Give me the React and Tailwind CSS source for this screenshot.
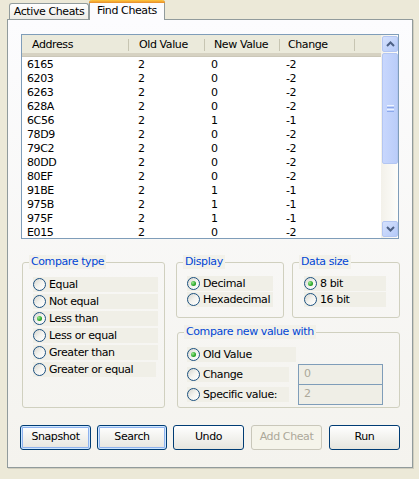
import React from "react";

const rows = [
  ["6165", "2", "0", "-2"],
  ["6203", "2", "0", "-2"],
  ["6263", "2", "0", "-2"],
  ["628A", "2", "0", "-2"],
  ["6C56", "2", "1", "-1"],
  ["78D9", "2", "0", "-2"],
  ["79C2", "2", "0", "-2"],
  ["80DD", "2", "0", "-2"],
  ["80EF", "2", "0", "-2"],
  ["91BE", "2", "1", "-1"],
  ["975B", "2", "1", "-1"],
  ["975F", "2", "1", "-1"],
  ["E015", "2", "0", "-2"],
];

function Radio({ checked }) {
  return (
    <span className="flex h-[13px] w-[13px] shrink-0 items-center justify-center rounded-full border border-[#1C5180] bg-gradient-to-br from-[#D6D5CE] via-[#F3F3EF] to-white">
      {checked && (
        <span className="h-[5px] w-[5px] rounded-full bg-[radial-gradient(circle_at_35%_35%,#9BEA8F,#2AA52A_60%,#178417)]" />
      )}
    </span>
  );
}

function RadioRow({ label, checked, w }) {
  return (
    <div className={`flex h-[15px] items-center bg-[#F0EFE7] ${w}`}>
      <Radio checked={checked} />
      <span className="ml-[3px] whitespace-nowrap leading-none">{label}</span>
    </div>
  );
}

function Group({ label, className, children }) {
  return (
    <div className={`relative rounded-[3px] border border-[#D0D0BF] ${className}`}>
      <span className="absolute left-[6px] top-[-8px] whitespace-nowrap bg-[#F2F1EA] px-[2px] leading-[14px] text-[#0046D5]">
        {label}
      </span>
      {children}
    </div>
  );
}

function Arrow({ up }) {
  return (
    <div className="flex h-[16px] w-[16px] items-center justify-center rounded-[2px] border border-[#B3C6F2] bg-gradient-to-br from-[#D5E1FD] to-[#B5CAF8]">
      <svg width="9" height="6" viewBox="0 0 9 6">
        <path
          d={up ? "M1 5 L4.5 1.5 L8 5" : "M1 1 L4.5 4.5 L8 1"}
          fill="none"
          stroke="#4D6185"
          strokeWidth="2"
        />
      </svg>
    </div>
  );
}

function Button({ children, w, focus, disabled }) {
  const base = "flex h-[25px] items-center justify-center rounded-[3px] border";
  const look = disabled
    ? "border-[#C9C7BA] bg-[#F5F4EA] text-[#ACA899]"
    : focus
    ? "border-[#003C74] bg-gradient-to-b from-white to-[#E6E5DE] shadow-[inset_0_0_0_1px_#CEE7FF,inset_0_0_0_2px_#8FB2EE]"
    : "border-[#003C74] bg-gradient-to-b from-white to-[#E6E5DE]";
  return <div className={`${base} ${look} ${w}`}>{children}</div>;
}

export default function App() {
  return (
    <div className="h-[479px] w-[419px] overflow-hidden bg-[#ECE9D8] text-[11px] tracking-[-0.4px] text-black [font-family:'DejaVu_Sans',sans-serif]">
      {/* tabs */}
      <div className="flex h-[19px] items-end pl-[9px]">
        <div className="flex h-[16px] w-[80px] items-center justify-center rounded-t-[3px] border border-b-0 border-[#919B9C] bg-gradient-to-b from-white to-[#ECEBE6] pt-[2px]">
          Active Cheats
        </div>
        <div className="relative z-10 -mb-px flex h-[20px] w-[76px] flex-col rounded-t-[3px] border-x border-[#919B9C] bg-[#FCFCFE]">
          <div className="-mx-px h-[3px] rounded-t-[3px] bg-gradient-to-b from-[#FFC83C] to-[#E68B2C]" />
          <div className="flex flex-1 items-center justify-center">Find Cheats</div>
        </div>
      </div>

      {/* page */}
      <div className="ml-[7px] h-[449px] w-[406px] border border-[#919B9C] bg-gradient-to-b from-[#FCFCFE] to-[#F4F3EE] shadow-[1px_1px_0_#D0CEBF]">
        {/* list */}
        <div className="ml-[13px] mt-[14px] flex h-[205px] w-[378px] border border-[#7F9DB9] bg-white">
          <div className="flex-1">
            <div className="flex h-[21px] border-b-[3px] border-[#D6D2C2] bg-[#EBEADB] shadow-[0_1px_0_#CBC7B8]">
              {[
                ["Address", "w-[107px] pl-[10px]"],
                ["Old Value", "w-[76px] pl-[10px]"],
                ["New Value", "w-[75px] pl-[9px]"],
                ["Change", "w-[75px] pl-[8px]"],
              ].map(([t, c]) => (
                <div key={t} className={`flex items-center ${c}`}>
                  <span className="flex-1 pt-[3px]">{t}</span>
                  <span className="mt-[2px] h-[12px] w-px bg-[#C7C5B2]" />
                </div>
              ))}
            </div>
            <div className="pt-[1px]">
              {rows.map((r) => (
                <div key={r[0]} className="flex h-[14px] items-center leading-none">
                  <span className="w-[107px] pl-[5px]">{r[0]}</span>
                  <span className="w-[76px] pl-[9px]">{r[1]}</span>
                  <span className="w-[75px] pl-[6px]">{r[2]}</span>
                  <span className="w-[75px] pl-[6px]">{r[3]}</span>
                </div>
              ))}
            </div>
          </div>
          {/* scrollbar */}
          <div className="flex w-[17px] flex-col bg-gradient-to-r from-[#F3F1EA] to-[#FDFDFA] pl-px">
            <div className="mt-px">
              <Arrow up />
            </div>
            <div className="mt-px flex h-[111px] w-[16px] flex-col items-center justify-center gap-[1px] rounded-[2px] border border-[#B3C6F2] bg-gradient-to-r from-[#C8D7FD] to-[#BACDF9]">
              <span className="h-px w-[7px] bg-[#EEF4FE]" />
              <span className="h-px w-[7px] bg-[#8CA9EC]" />
              <span className="h-px w-[7px] bg-[#EEF4FE]" />
              <span className="h-px w-[7px] bg-[#8CA9EC]" />
            </div>
            <div className="flex-1" />
            <div className="mb-px">
              <Arrow />
            </div>
          </div>
        </div>

        {/* groups */}
        <div className="mt-[23px] flex">
          <Group label="Compare type" className="ml-[14px] h-[146px] w-[143px]">
            <div className="flex flex-col gap-[2px] pl-[10px] pt-[14px]">
              <RadioRow label="Equal" w="w-[125px]" />
              <RadioRow label="Not equal" w="w-[125px]" />
              <RadioRow label="Less than" w="w-[125px]" checked />
              <RadioRow label="Less or equal" w="w-[125px]" />
              <RadioRow label="Greater than" w="w-[125px]" />
              <RadioRow label="Greater or equal" w="w-[123px]" />
            </div>
          </Group>
          <div className="ml-[11px] flex flex-col">
            <div className="flex">
              <Group label="Display" className="h-[56px] w-[108px]">
                <div className="flex flex-col gap-[1px] pl-[10px] pt-[13px]">
                  <RadioRow label="Decimal" w="w-[86px]" checked />
                  <RadioRow label="Hexadecimal" w="w-[86px]" />
                </div>
              </Group>
              <Group label="Data size" className="ml-[8px] h-[56px] w-[108px]">
                <div className="flex flex-col gap-[1px] pl-[11px] pt-[13px]">
                  <RadioRow label="8 bit" w="w-[82px]" checked />
                  <RadioRow label="16 bit" w="w-[82px]" />
                </div>
              </Group>
            </div>
            <Group label="Compare new value with" className="ml-px mt-[14px] h-[76px] w-[223px]">
              <div className="pl-[9px] pt-[14px]">
                <RadioRow label="Old Value" w="w-[109px]" checked />
                <div className="mt-[2px] flex">
                  <div className="flex flex-col">
                    <div className="flex h-[20px] items-center">
                      <RadioRow label="Change" w="w-[102px]" />
                    </div>
                    <div className="flex h-[20px] items-center">
                      <RadioRow label="Specific value:" w="w-[102px]" />
                    </div>
                  </div>
                  <div className="ml-[9px] flex flex-col">
                    <div className="flex h-[21px] w-[85px] items-center border border-[#7F9DB9] bg-[#EFEEE6] pl-[5px] text-[#ACA899]">
                      0
                    </div>
                    <div className="-mt-px flex h-[21px] w-[85px] items-center border border-[#7F9DB9] bg-[#EFEEE6] pl-[5px] text-[#ACA899]">
                      2
                    </div>
                  </div>
                </div>
              </div>
            </Group>
          </div>
        </div>

        {/* buttons */}
        <div className="ml-[12px] mt-[17px] flex">
          <Button w="w-[71px]" focus>Snapshot</Button>
          <div className="ml-[6px]">
            <Button w="w-[70px]" focus>Search</Button>
          </div>
          <div className="ml-[6px]">
            <Button w="w-[71px]">Undo</Button>
          </div>
          <div className="ml-[7px]">
            <Button w="w-[71px]" disabled>Add Cheat</Button>
          </div>
          <div className="ml-[7px]">
            <Button w="w-[71px]">Run</Button>
          </div>
        </div>
      </div>
    </div>
  );
}
